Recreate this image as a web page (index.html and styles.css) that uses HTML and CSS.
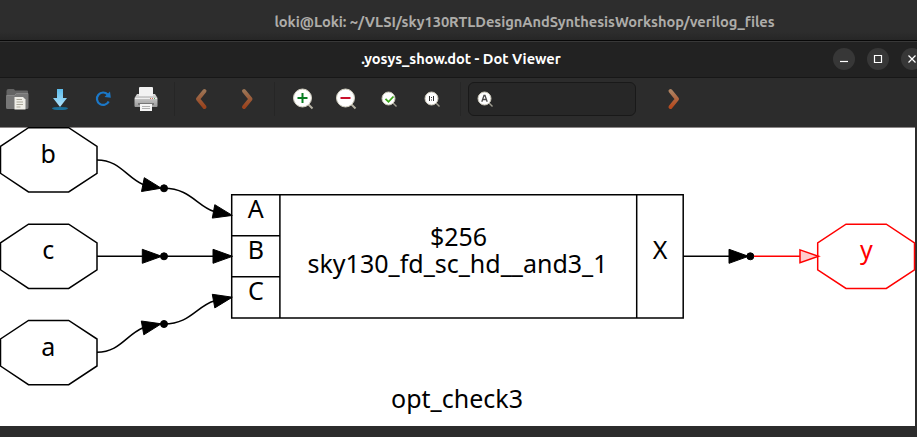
FILE: index.html
```html
<!DOCTYPE html>
<html lang="en">
<head>
<meta charset="utf-8">
<title>.yosys_show.dot - Dot Viewer</title>
<link rel="stylesheet" href="styles.css">
</head>
<body>
<header class="terminal-title"><span>loki@Loki: ~/VLSI/sky130RTLDesignAndSynthesisWorkshop/verilog_files</span></header>
<main class="window">
  <div class="titlebar">
    <h1>.yosys_show.dot - Dot Viewer</h1>
    <div class="controls">
      <button aria-label="Minimize"><svg width="22" height="22"><path d="M7 13.500h8"/></svg></button>
      <button aria-label="Maximize"><svg width="22" height="22"><path d="M7.500 7.500h7v7h-7z"/></svg></button>
      <button aria-label="Close"><svg width="22" height="22"><path d="m7.500 7.500 7 7m0-7-7 7"/></svg></button>
    </div>
  </div>
  <nav class="toolbar">
    <svg class="defs" width="0" height="0">
      <defs>
        <linearGradient id="copper" x1="0" y1="0" x2="0" y2="1"><stop stop-color="#9b7354"/><stop offset="1" stop-color="#9b431d"/></linearGradient>
        <linearGradient id="copper-bright" x1="0" y1="0" x2="0" y2="1"><stop stop-color="#ad8261"/><stop offset="1" stop-color="#b54a1e"/></linearGradient>
        <linearGradient id="sky" x1="0" y1="0" x2="0" y2="1"><stop stop-color="#5cbcec"/><stop offset="1" stop-color="#b0e2fa"/></linearGradient>
        <linearGradient id="metal" x1="0" y1="0" x2="0" y2="1"><stop stop-color="#d9d9d9"/><stop offset="1" stop-color="#999"/></linearGradient>
      </defs>
    </svg>
    <div class="group">
      <button aria-label="Open"><svg width="24" height="24" viewBox="0 0 24 24"><path d="M1.500 4q0-2 2-2h5q1 0 1.500 1.500h12q1 0 1 1v5h-21.500z" fill="#646464"/><path d="M1 8.500h8l2-2h12.500v14q0 1.500-1.500 1.500H2.500q-1.500 0-1.500-1.500z" fill="#777"/><path d="M1.500 8.500h8l2-2H23" fill="none" stroke="#929292" stroke-width=".7"/><path d="M9.500 10h8.500l2.500 2.500v10h-11z" fill="#efeee8"/><path d="M11.500 12.500H17m-5.500 2.500H18m-6.500 2.500H18m-6.500 2.500h4" stroke="#aaa799"/></svg></button>
      <button aria-label="Save"><svg width="24" height="24" viewBox="0 0 24 24"><ellipse cx="12" cy="21.500" rx="8" ry="1.600" fill="#1b6f99"/><path d="M9 2h6v9h4l-7 9-7-9h4z" fill="url(#sky)"/></svg></button>
      <button aria-label="Reload"><svg width="24" height="24" viewBox="0 0 24 24"><path d="M16.700 7.500A6.200 6.200 0 1 0 17.700 14.500" fill="none" stroke="#1b78c8" stroke-width="2.200"/><path d="m19 4.500.8 6.200-6.300-.7z" fill="#1b78c8"/></svg></button>
      <button aria-label="Print"><svg width="24" height="24" viewBox="0 0 24 24"><rect x="5" width="14" height="10" rx="1" fill="#f2f2f2"/><path d="M3 7h2v2h14V7h2l2.500 4v8q0 1-1 1h-21q-1 0-1-1v-8z" fill="url(#metal)"/><path d="M1 11.500h22" stroke="#eee"/><path d="M4 17h16" stroke="#777" stroke-width="2"/><path d="M6 17h12v7H6z" fill="#f5f5f5"/><path d="M8 19.500h8m-8 2h8" stroke="#b0b0b0"/><path d="M16 11.500h1m1 0h1" stroke="#d36e54"/><path d="M20 11.500h1" stroke="#57a85a"/></svg></button>
    </div>
    <div class="separator"></div>
    <div class="group">
      <button aria-label="Back"><svg width="24" height="24" viewBox="0 0 24 24"><path d="m13.500 4-6.500 8 6.500 8" class="chevron"/></svg></button>
      <button aria-label="Forward"><svg width="24" height="24" viewBox="0 0 24 24"><path d="m10 4 6.500 8-6.500 8" class="chevron"/></svg></button>
    </div>
    <div class="separator"></div>
    <div class="group">
      <button aria-label="Zoom in"><svg width="24" height="24" viewBox="0 0 24 24"><path d="m16.500 16.500 5 5" stroke="#b6b3a5" stroke-width="2"/><circle cx="11.500" cy="11" r="9" fill="#fff" stroke="#d2cfc0"/><path d="M11.500 6v10M6.500 11h10" stroke="#087d23" stroke-width="2"/></svg></button>
      <button aria-label="Zoom out"><svg width="24" height="24" viewBox="0 0 24 24"><path d="m16.500 16.500 5 5" stroke="#b6b3a5" stroke-width="2"/><circle cx="11.500" cy="11" r="9" fill="#fff" stroke="#d2cfc0"/><path d="M6.500 11h10" stroke="#c9102c" stroke-width="2"/></svg></button>
      <button aria-label="Zoom to fit"><svg width="24" height="24" viewBox="0 0 24 24"><path d="m15.500 15.500 4 4" stroke="#9f9d91" stroke-width="1.400"/><circle cx="11.500" cy="11.500" r="6.500" fill="#fff" stroke="#c9c6b8"/><path d="m8.500 11.800 3 3 5-5.300" fill="none" stroke="#39a518" stroke-width="1.800"/></svg></button>
      <button aria-label="Zoom 1:1"><svg width="24" height="24" viewBox="0 0 24 24"><path d="m15.500 15.500 4 4" stroke="#9f9d91" stroke-width="1.400"/><circle cx="11.500" cy="11.500" r="6.500" fill="#fff" stroke="#c9c6b8"/><path d="M9.500 9v5m4-5v5M11.500 10v1m0 1.500v1" stroke="#333"/></svg></button>
    </div>
    <div class="separator"></div>
    <label class="search"><svg width="24" height="24" viewBox="0 0 24 24"><path d="m15.500 15.500 4 4" stroke="#9f9d91" stroke-width="1.400"/><circle cx="11.500" cy="11.500" r="6.500" fill="#fff" stroke="#c9c6b8"/><path d="m8.800 14.800 2.200-6.300h1l2.200 6.300M9.800 12.500h3.500" fill="none" stroke="#4b4b4b" stroke-width="1.300"/></svg><input type="text" aria-label="Find"></label>
    <button class="next" aria-label="Find next"><svg width="24" height="24" viewBox="0 0 24 24"><path d="m9.500 4 6.500 8-6.500 8" class="chevron bright"/></svg></button>
  </nav>
  <section class="canvas">
    <svg class="graph" width="915" height="298" viewBox="0 128 915 298">
      <g class="node">
        <path d="M28.500 127.700h40.200L97 146.300v27L68.700 191.900H28.500L.5 173.300v-27z"/>
        <path d="M28.500 224.200h40.200L97 242.800v27l-28.300 18.600H28.500L.5 269.800v-27z"/>
        <path d="M28.500 320.400h40.200L97 339v27l-28.300 18.700H28.500L.5 366v-27z"/>
        <path d="M231.700 194.700h451.500v123.200H231.700zM279.900 194.700v123.200M636.700 194.700v123.200M231.700 235.700h48.200M231.700 276.700h48.200"/>
      </g>
      <g class="edge">
        <path d="M97 159.900C119.500 159.900 126 177 143 184.500M164 188.300C190 188.300 197 206 214 211.500"/>
        <path d="M97 256.300h46M164 256.300h49M683 256.300h46"/>
        <path d="M97 352.300C119.500 352.300 126 335 143 327.800M164 324C190 324 197 306 214 301"/>
      </g>
      <g class="arrow">
        <path d="m144.300 177.700 17 10.500-19.800 3.300zM214.800 204.700l17.500 10.700-20 2.700z"/>
        <path d="m142.300 249.300 19.500 7-19.500 7zM213 249.300l19.500 7-19.500 7zM729 249.300l19.500 7-19.500 7z"/>
        <path d="m141.300 321 20 2.800-17.500 11zM212.300 294.300l20 2.900-17.500 10.700z"/>
        <circle cx="164" cy="188.300" r="3.500"/><circle cx="164" cy="256.300" r="3.500"/><circle cx="164" cy="324" r="3.500"/><circle cx="750.300" cy="256.300" r="3.500"/>
      </g>
      <g class="output">
        <path d="M754 256.300h46M846 224.200h40.300l28.200 18.600v27l-28.200 18.600H846l-28.300-18.600v-27z"/>
        <path class="output-arrow" d="m800 249.900 18.500 6.400-18.500 6.400z"/>
      </g>
      <g class="labels">
        <text x="48.300" y="162.500">b</text><text x="48.300" y="259">c</text><text x="48.300" y="355.500">a</text>
        <text x="255.800" y="218">A</text><text x="255.800" y="259">B</text><text x="255.800" y="300">C</text>
        <text x="458.500" y="245.500" textLength="57">$256</text>
        <text x="457.500" y="272.500" textLength="300">sky130_fd_sc_hd__and3_1</text>
        <text x="660" y="259">X</text><text class="red" x="866.300" y="259">y</text>
        <text x="457" y="408" textLength="132">opt_check3</text>
      </g>
    </svg>
  </section>
</main>
</body>
</html>
```
FILE: styles.css
```css
* { box-sizing: border-box; }
html, body { margin: 0; width: 100%; height: 100%; overflow: hidden; }
body { display: flex; flex-direction: column; background: #2c2c2c; font-family: Ubuntu, "Noto Sans", sans-serif; }
button { border: 0; padding: 0; background: none; display: grid; place-items: center; }
svg { display: block; }

.terminal-title { height: 40px; flex: none; display: grid; place-items: center; background: linear-gradient(#2d2d2d 80%, #262626); color: #adaca9; font-size: 14.67px; font-weight: 600; padding: 3px 0 0 132px; white-space: nowrap; }
.terminal-title span { letter-spacing: -.06px; }

.window { flex: 1; display: flex; flex-direction: column; min-height: 0; border-top: 1px solid #080808; }
.titlebar { height: 37px; flex: none; display: grid; grid-template-columns: 1fr auto 1fr; align-items: center; padding-bottom: 1px; background: #222; border-top: 1px solid #383838; border-bottom: 1px solid #171717; }
.titlebar h1 { grid-column: 2; margin: 0 0 0 5px; color: #fff; font-size: 14.67px; font-weight: 600; line-height: 20px; letter-spacing: -.04px; white-space: nowrap; }
.controls { display: flex; gap: 12px; justify-self: end; margin-right: -6px; }
.controls button { width: 22px; height: 22px; border-radius: 50%; background: #373737; }
.controls path { fill: none; stroke: #fff; stroke-width: 1.2; }

.toolbar { height: 49px; flex: none; display: flex; align-items: center; padding-bottom: 7px; margin-left: -5px; background: #2c2c2c; }
.defs { flex: none; }
.group { display: flex; }
.group button, .next { width: 43px; height: 34px; flex: none; }
.separator { width: 1px; height: 34px; margin: 0 6.5px; background: #262626; flex: none; }
.chevron { fill: none; stroke: url(#copper); stroke-width: 4; stroke-linecap: round; stroke-linejoin: round; }
.chevron.bright { stroke: url(#copper-bright); }
.search { display: flex; align-items: center; width: 168px; height: 34px; margin-left: 1px; padding-left: 4px; flex: none; background: #272727; border: 1px solid #191919; border-radius: 6px; }
.search input { width: 130px; border: 0; outline: 0; background: transparent; color: #fff; }
.next { margin-left: 15px; }

.canvas { height: 299px; width: 915px; flex: none; background: #fff; border-top: 1px solid #8b8787; }
.graph { overflow: visible; }
.node path { fill: none; stroke: #000; stroke-width: 1.5; }
.edge path { fill: none; stroke: #000; stroke-width: 1.5; }
.arrow { fill: #000; stroke: #000; stroke-width: 1; }
.output path { fill: none; stroke: #f00; stroke-width: 1.5; }
.output .output-arrow { fill: #fcc; }
.labels { font-family: "Noto Sans", "Open Sans", sans-serif; font-size: 25px; text-anchor: middle; fill: #000; }
.labels .red { fill: #f00; }
```
